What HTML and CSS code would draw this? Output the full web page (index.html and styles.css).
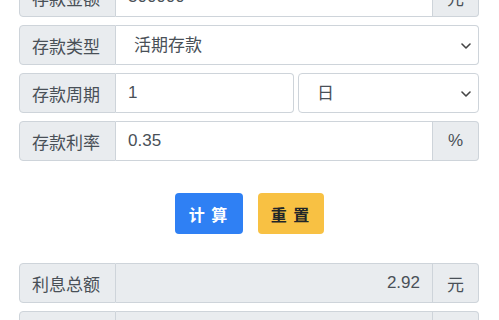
FILE: index.html
```html
<!DOCTYPE html>
<html lang="zh-CN">
<head>
<meta charset="utf-8">
<title>存款利息计算器</title>
<link rel="stylesheet" href="styles.css">
</head>
<body>
<div class="page">
  <div class="rows">
    <div class="row">
      <span class="addon label">存款金额</span>
      <input class="field" type="text" value="300000">
      <span class="addon unit">元</span>
    </div>
    <div class="row">
      <span class="addon label">存款类型</span>
      <div class="select-wrap last">
        <select class="field select"><option>活期存款</option></select>
        <svg class="chev" viewBox="0 0 10 6" width="10" height="6"><path d="M1 1l4 4 4-4" fill="none" stroke="#444" stroke-width="1.6" stroke-linecap="round" stroke-linejoin="round"/></svg>
      </div>
    </div>
    <div class="row">
      <span class="addon label">存款周期</span>
      <input class="field last" type="text" value="1">
      <div class="select-wrap sep">
        <select class="field select"><option>日</option></select>
        <svg class="chev" viewBox="0 0 10 6" width="10" height="6"><path d="M1 1l4 4 4-4" fill="none" stroke="#444" stroke-width="1.6" stroke-linecap="round" stroke-linejoin="round"/></svg>
      </div>
    </div>
    <div class="row">
      <span class="addon label">存款利率</span>
      <input class="field" type="text" value="0.35">
      <span class="addon unit">%</span>
    </div>
  </div>

  <div class="actions">
    <button class="btn primary" type="button">计 算</button>
    <button class="btn warning" type="button">重 置</button>
  </div>

  <div class="rows">
    <div class="row">
      <span class="addon label">利息总额</span>
      <input class="field readonly" type="text" value="2.92" readonly>
      <span class="addon unit">元</span>
    </div>
    <div class="row">
      <span class="addon label">本息合计</span>
      <input class="field readonly" type="text" value="300002.92" readonly>
      <span class="addon unit">元</span>
    </div>
  </div>
</div>
</body>
</html>
```
FILE: styles.css
```css
* { box-sizing: border-box; }
html, body { margin: 0; padding: 0; background: #fff; }
body {
  font-family: "Liberation Sans", "Noto Sans CJK SC", sans-serif;
  font-size: 17px;
  color: #495057;
  overflow: hidden;
}
.page {
  width: 460px;
  margin: -23px 0 0 19px;
}
.rows {
  display: flex;
  flex-direction: column;
  gap: 8px;
}
.row {
  display: flex;
  height: 40px;
}
.addon {
  display: flex;
  align-items: center;
  background: #e9ecef;
  border: 1px solid #ced4da;
  padding: 0 12px;
  color: #495057;
  white-space: nowrap;
}
.label {
  flex: 0 0 97px;
  border-radius: 4px 0 0 4px;
}
.unit {
  flex: 0 0 46px;
  justify-content: center;
  border-left: none;
  border-radius: 0 4px 4px 0;
}
.field {
  flex: 1 1 0;
  width: 0;
  min-width: 0;
  height: 40px;
  border: 1px solid #ced4da;
  border-left: none;
  background: #fff;
  font: inherit;
  color: #495057;
  padding: 0 12px;
  outline: none;
  margin: 0;
}
.field.last { border-radius: 0 4px 4px 0; }
.readonly {
  background: #e9ecef;
  text-align: right;
}
.select-wrap {
  position: relative;
  flex: 1 1 0;
  display: flex;
  min-width: 0;
}
.select-wrap.last .select { border-radius: 0 4px 4px 0; }
.select-wrap.sep { flex: 0 0 181px; margin-left: 4px; }
.select-wrap.sep .select { border-left: 1px solid #ced4da; border-radius: 4px; }
.select {
  -webkit-appearance: none;
  appearance: none;
  width: 100%;
  padding: 0 28px 0 18px;
}
.chev {
  position: absolute;
  right: 8px;
  top: 18px;
  pointer-events: none;
}
.actions {
  display: flex;
  justify-content: center;
  gap: 15px;
  margin: 32px 0 29px;
}
.btn {
  height: 41px;
  padding: 0;
  border: 1px solid transparent;
  border-radius: 4px;
  font-family: inherit;
  font-size: 16px;
  font-weight: bold;
  letter-spacing: 1px;
  white-space: nowrap;
}
.primary { background: #2f80f4; color: #fff; width: 68px; }
.warning { background: #f8c143; color: #212529; width: 66px; }
```
